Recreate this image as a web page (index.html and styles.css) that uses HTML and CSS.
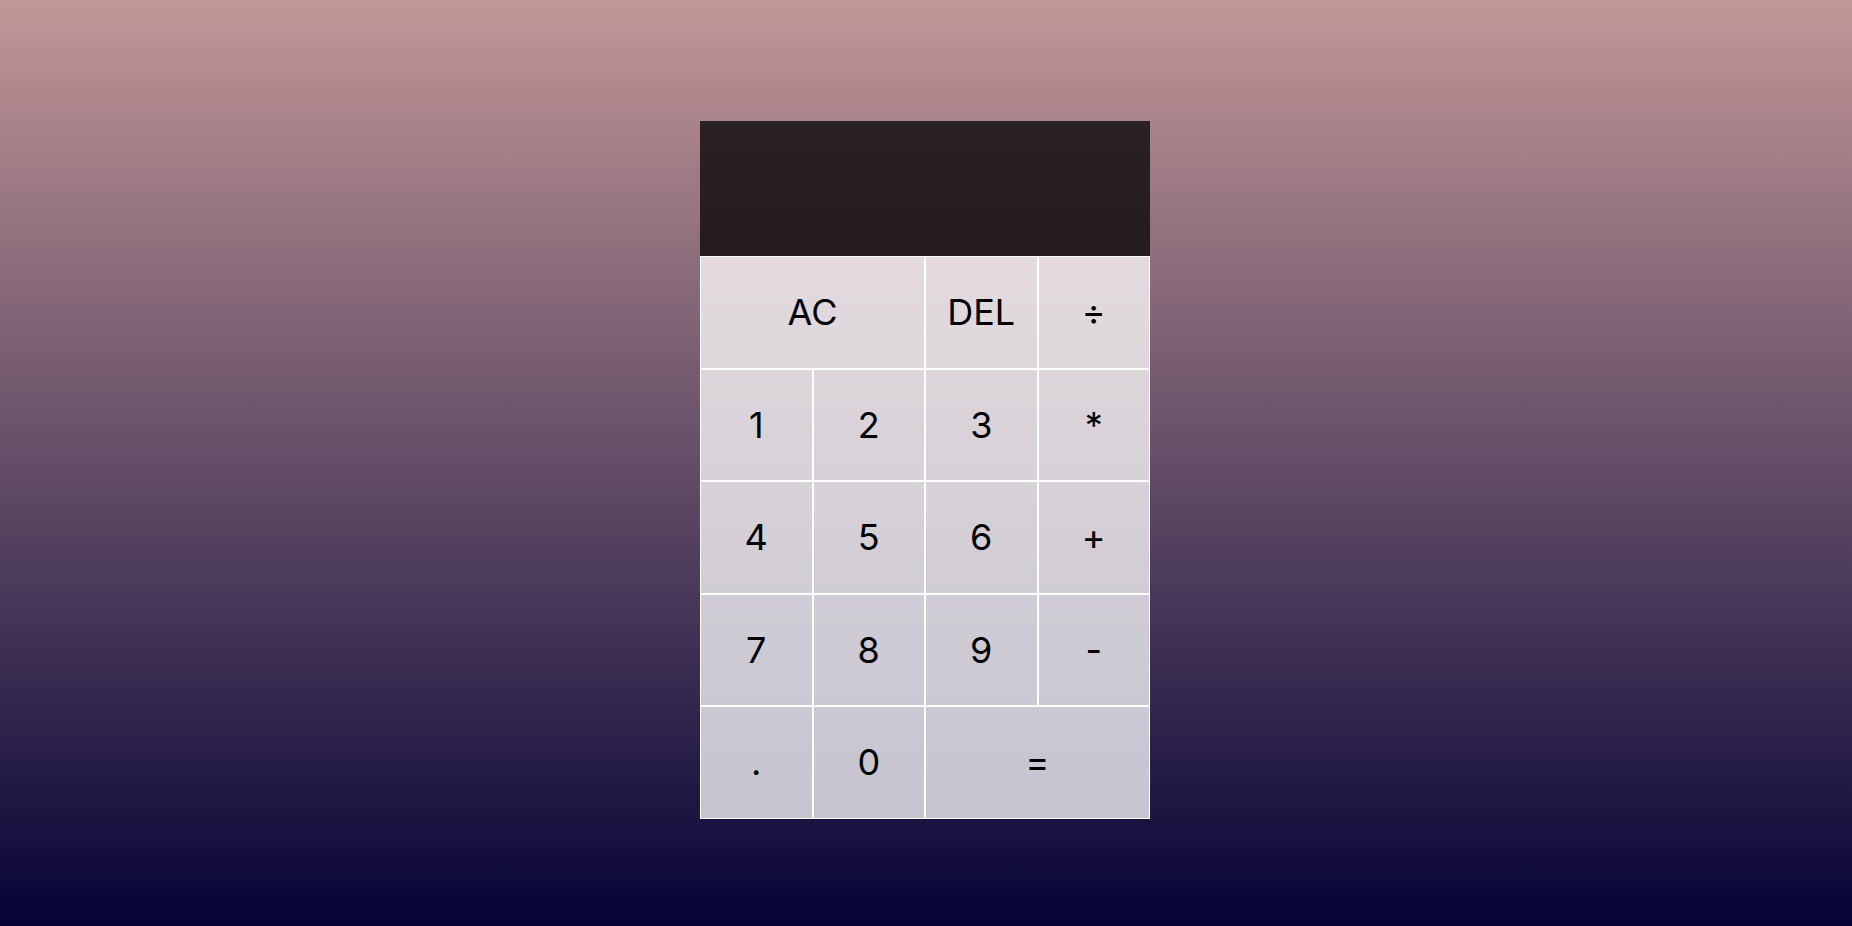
FILE: index.html
```html
<!DOCTYPE html>
<html lang="en">
<head>
<meta charset="utf-8">
<title>Calculator</title>
<link rel="stylesheet" href="styles.css">
</head>
<body>
<div class="calculator-grid">
  <div class="output">
    <div class="previous-operand"></div>
    <div class="current-operand"></div>
  </div>
  <button class="span-two">AC</button>
  <button>DEL</button>
  <button>÷</button>
  <button>1</button>
  <button>2</button>
  <button>3</button>
  <button>*</button>
  <button>4</button>
  <button>5</button>
  <button>6</button>
  <button>+</button>
  <button>7</button>
  <button>8</button>
  <button>9</button>
  <button>-</button>
  <button>.</button>
  <button>0</button>
  <button class="span-two">=</button>
</div>
</body>
</html>
```
FILE: styles.css
```css
*, *::before, *::after {
  box-sizing: border-box;
  font-family: "Inter", "Liberation Sans", sans-serif;
  font-weight: normal;
}

html, body {
  margin: 0;
  padding: 0;
  height: 100%;
}

body {
  background: linear-gradient(to bottom, #c29797, #050336);
  min-height: 926px;
}

.calculator-grid {
  display: grid;
  justify-content: center;
  grid-template-columns: repeat(4, 112.5px);
  grid-template-rows: 135px repeat(5, 112.5px);
  padding-top: 121px;
  padding-right: 2px;
}

.calculator-grid > button {
  cursor: pointer;
  font-size: 36px;
  color: #000;
  border: 1px solid #fff;
  outline: none;
  background-color: rgba(255, 255, 255, 0.75);
  padding: 0;
  margin: 0;
  border-radius: 0;
}

.span-two {
  grid-column: span 2;
}

.output {
  grid-column: 1 / -1;
  background-color: rgba(0, 0, 0, 0.75);
  display: flex;
  align-items: flex-end;
  justify-content: space-around;
  flex-direction: column;
  padding: 11px;
  word-wrap: break-word;
  word-break: break-all;
}

.previous-operand {
  color: rgba(255, 255, 255, 0.75);
  font-size: 27px;
}

.current-operand {
  color: #fff;
  font-size: 45px;
}
```
